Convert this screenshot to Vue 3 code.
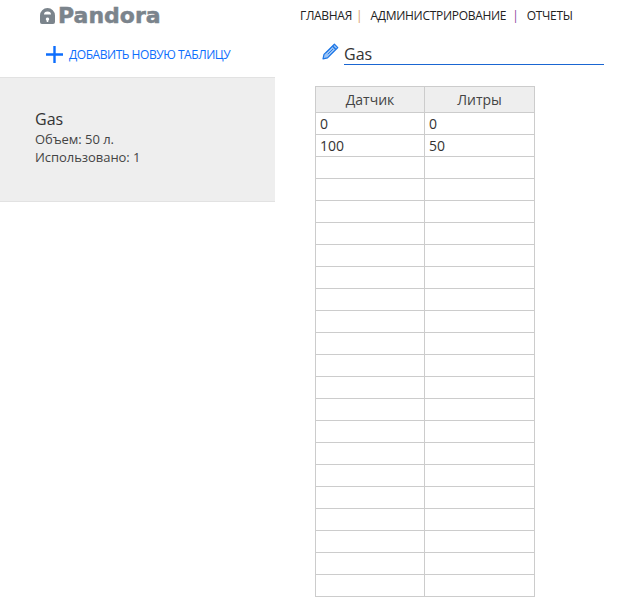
<template>
  <div class="page">
    <header class="top">
      <div class="logo">
        <svg class="lock" width="15" height="16" viewBox="0 0 15 16">
          <path fill-rule="evenodd" fill="#7b848c" d="M0 7.500a7.500 7.500 0 0 1 15 0V14a2 2 0 0 1-2 2H2a2 2 0 0 1-2-2zM4 6.500h7a3.500 3 0 0 0-7 0zM7.500 9.500a1.700 1.700 0 0 0-.8 3.200v1.300h1.600v-1.300a1.700 1.700 0 0 0-.8-3.200z" />
        </svg>
        <span class="logo-text">Pandora</span>
      </div>
      <nav class="nav">
        <a>ГЛАВНАЯ</a>
        <i class="sep orange">|</i>
        <a>АДМИНИСТРИРОВАНИЕ</a>
        <i class="sep purple">|</i>
        <a>ОТЧЕТЫ</a>
      </nav>
    </header>

    <div class="columns">
      <aside class="side">
        <button class="add" type="button">
          <svg width="17" height="17" viewBox="0 0 17 17">
            <path d="M8.500 0v17M0 8.500h17" stroke="#0d6efd" stroke-width="2.400" />
          </svg>
          <span>ДОБАВИТЬ НОВУЮ ТАБЛИЦУ</span>
        </button>
        <div class="card">
          <div class="card-title">Gas</div>
          <div class="card-line">Объем: 50 л.</div>
          <div class="card-line">Использовано: 1</div>
        </div>
      </aside>

      <main class="content">
        <div class="name-row">
          <svg class="pencil" width="17" height="17" viewBox="0 0 17 17">
            <path d="M12.400 1.200l3.400 3.400L5.500 14.900l-4.500 1 1-4.500z" fill="#9cc4f5" stroke="#1c76e6" stroke-width="1.200" stroke-linejoin="round" />
            <path d="M10.500 3.100l3.400 3.400" stroke="#1c76e6" stroke-width="1.400" />
            <path d="M4.300 9.700l5.200-5.200M7.300 12.700l5.200-5.200M5.800 11.200l5.200-5.200" stroke="#1c76e6" stroke-width="0.900" />
          </svg>
          <div class="name">Gas</div>
        </div>
        <table class="grid">
          <colgroup>
            <col class="col-a" />
            <col />
          </colgroup>
          <thead>
            <tr>
              <th>Датчик</th>
              <th>Литры</th>
            </tr>
          </thead>
          <tbody>
            <tr v-for="(row, i) in rows" :key="i">
              <td>{{ row[0] }}</td>
              <td>{{ row[1] }}</td>
            </tr>
          </tbody>
        </table>
      </main>
    </div>
  </div>
</template>

<script setup>
const filled = [
  ["0", "0"],
  ["100", "50"],
];
const rows = [...filled, ...Array.from({ length: 20 }, () => ["", ""])];
</script>

<style>
html,
body {
  background: #fff;
}
</style>

<style scoped>
.page {
  width: 624px;
  height: 614px;
  overflow: hidden;
  font-family: "Open Sans", "Noto Sans", sans-serif;
  color: #333;
}

.top {
  display: flex;
  height: 32px;
}

.logo {
  width: 300px;
  padding: 8px 0 0 40px;
  box-sizing: border-box;
  display: flex;
  align-items: flex-start;
  gap: 3px;
}

.lock {
  flex: none;
}

.logo-text {
  font-family: "DejaVu Sans", sans-serif;
  font-weight: 700;
  font-size: 22px;
  line-height: 16px;
  color: #7b848c;
  -webkit-text-stroke: 0.5px #7b848c;
}

.nav {
  display: flex;
  padding-top: 7px;
  font-size: 12px;
  line-height: 18px;
  color: #222;
  letter-spacing: -0.3px;
}

.sep {
  font-style: normal;
  letter-spacing: 0;
}

.orange {
  color: #d9a066;
  margin: 0 8px 0 4px;
}

.purple {
  color: #8a3f9e;
  margin: 0 8px 0 6px;
}

.columns {
  display: flex;
}

.side {
  width: 275px;
  flex: none;
}

.add {
  display: flex;
  align-items: center;
  gap: 6px;
  height: 45px;
  padding: 0 0 0 46px;
  border: none;
  background: none;
  font-family: inherit;
  font-size: 12px;
  letter-spacing: -0.45px;
  color: #0d6efd;
}

.card {
  box-sizing: border-box;
  height: 125px;
  padding: 31px 35px 0;
  background: #eee;
  border-top: 1px solid #e2e2e2;
  border-bottom: 1px solid #e2e2e2;
}

.card-title {
  font-size: 16px;
  line-height: 21px;
  color: #333;
}

.card-line {
  font-size: 13px;
  line-height: 18px;
  letter-spacing: -0.05px;
  color: #444;
}

.content {
  padding-left: 40px;
}

.name-row {
  display: flex;
  align-items: flex-start;
  padding-top: 11px;
  margin-left: 7px;
  height: 54px;
  box-sizing: border-box;
}

.pencil {
  margin-right: 5px;
  flex: none;
}

.name {
  width: 260px;
  height: 22px;
  box-sizing: border-box;
  border-bottom: 1px solid #1a66d2;
  font-size: 16px;
  line-height: 23px;
  color: #333;
}

.grid {
  border-collapse: collapse;
  table-layout: fixed;
  width: 220px;
  font-size: 14px;
}

.col-a {
  width: 109px;
}

.grid th,
.grid td {
  border: 1px solid #ccc;
  padding: 0 4px;
  height: 22px;
  box-sizing: border-box;
  line-height: 20px;
}

.grid th {
  height: 26px;
  background: #eee;
  font-weight: 400;
  color: #444;
  text-align: center;
}
</style>
